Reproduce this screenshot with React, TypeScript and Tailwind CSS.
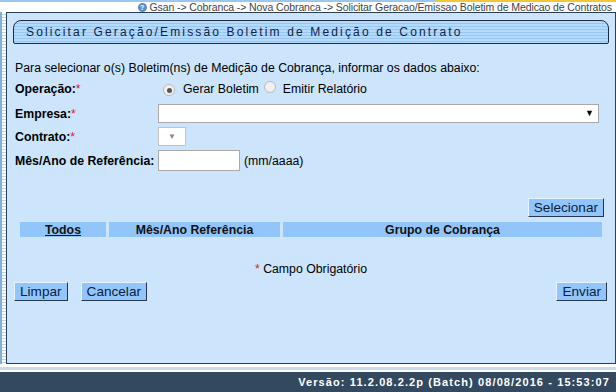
import React from "react";

const label = "text-[12.3px] font-bold text-black";
const btn =
  "h-[19px] px-[5px] bg-[#91c5fb] border border-t-[#e6f2ff] border-l-[#e6f2ff] border-b-[#24374d] border-r-[#24374d] text-[13.6px] leading-none text-[#0c1f3a]";

function Req() {
  return <span className="text-[#e02020] font-normal">*</span>;
}

function Radio({ checked }: { checked?: boolean }) {
  return (
    <span className="inline-flex h-[12px] w-[12px] items-center justify-center rounded-full border border-[#b9b9b9] bg-[#f0f0f0]">
      {checked && <span className="h-[5px] w-[5px] rounded-full bg-[#555]" />}
    </span>
  );
}

export default function App() {
  return (
    <div className="flex h-[392px] w-[616px] flex-col overflow-hidden bg-white font-['Liberation_Sans',Arial,sans-serif]">
      {/* top strip */}
      <div className="flex h-[2px] shrink-0">
        <div className="flex-1 bg-[#9cc7ec]" />
        <div className="w-[180px] bg-[#f4c534]" />
      </div>
      {/* breadcrumb */}
      <div className="flex h-[10px] shrink-0 items-center justify-end gap-[3px] pr-[4px] text-[10.5px] leading-none text-[#444]">
        <span className="inline-flex h-[9px] w-[9px] items-center justify-center rounded-full bg-[#5b8fc7] text-[7px] font-bold text-white">
          ?
        </span>
        <span className="tracking-[-0.1px]">
          Gsan -&gt; Cobranca -&gt; Nova Cobranca -&gt; Solicitar Geracao/Emissao Boletim de Medicao de Contratos
        </span>
      </div>

      {/* body */}
      <div className="flex h-[352px] shrink-0">
        <div className="w-[6px] border-l-2 border-l-[#7fb0de] bg-[repeating-linear-gradient(#ffffff_0px,#ffffff_2px,#b9d6f0_2px,#b9d6f0_3px)]" />
        <div className="flex flex-1 flex-col border border-[#2c3e52] bg-[#cce5fd] px-[6px] pt-[7px]">
          {/* title bar */}
          <div className="flex h-[24px] items-center rounded-t-[8px] rounded-b-[2px] border border-[#1d2d40] bg-[repeating-linear-gradient(#b6dafd_0px,#b6dafd_2px,#96c6f5_2px,#96c6f5_3px)] pl-[12px]">
            <span className="text-[12px] tracking-[2.15px] text-[#0f2440]">
              Solicitar Geração/Emissão Boletim de Medição de Contrato
            </span>
          </div>

          <div className="mt-[15px] pl-[2px] text-[12.3px] text-black">
            Para selecionar o(s) Boletim(ns) de Medição de Cobrança, informar os dados abaixo:
          </div>

          {/* form grid */}
          <div className="grid grid-cols-[143px_1fr] items-center gap-y-[4px] pl-[2px]">
            <div className={label}>
              Operação:<Req />
            </div>
            <div className="flex h-[23px] items-center text-[12.3px] text-black">
              <span className="ml-[5px]"><Radio checked /></span>
              <span className="ml-[8px]">Gerar Boletim</span>
              <span className="ml-[5px]"><Radio /></span>
              <span className="ml-[7px]">Emitir Relatório</span>
            </div>

            <div className={label}>
              Empresa:<Req />
            </div>
            <div className="flex h-[19px] w-[441px] items-center justify-end border border-[#a9a9a9] bg-white pr-[4px] text-[9px] text-black">
              ▼
            </div>

            <div className={label}>
              Contrato:<Req />
            </div>
            <div className="flex h-[19px] w-[28px] items-center justify-center border border-[#c4c4c4] bg-white text-[8px] text-[#888]">
              ▼
            </div>

            <div className={label}>Mês/Ano de Referência:</div>
            <div className="flex items-center gap-[4px]">
              <div className="h-[21px] w-[82px] border border-[#a9a9a9] bg-white" />
              <span className="text-[12.3px] text-black">(mm/aaaa)</span>
            </div>
          </div>

          <div className="mt-[27px] flex justify-end pr-[5px]">
            <button className={btn}>Selecionar</button>
          </div>

          {/* table header */}
          <div className="mt-[5px] ml-[7px] mr-[7px] flex h-[15px] gap-[3px] text-[12.3px] font-bold text-[#111]">
            <div className="flex w-[86px] items-center justify-center bg-[#92c6fb] underline">Todos</div>
            <div className="flex w-[171px] items-center justify-center bg-[#92c6fb]">Mês/Ano Referência</div>
            <div className="flex flex-1 items-center justify-center bg-[#92c6fb]">Grupo de Cobrança</div>
          </div>

          <div className="mt-[23px] text-center text-[12.3px] text-black">
            <Req /> Campo Obrigatório
          </div>

          <div className="mt-[3px] flex items-center pl-[1px] pr-[2px]">
            <button className={btn}>Limpar</button>
            <button className={`${btn} ml-[13px]`}>Cancelar</button>
            <div className="flex-1" />
            <button className={btn}>Enviar</button>
          </div>
        </div>
      </div>

      {/* footer */}
      <div className="mt-[3px] h-[3px] shrink-0 bg-[#c9dced]" />
      <div className="mt-[2px] flex h-[20px] shrink-0 items-center justify-end bg-[#33495f] pr-[6px]">
        <span className="text-[11px] font-bold tracking-[1.1px] text-white">
          Versão: 11.2.08.2.2p (Batch) 08/08/2016 - 15:53:07
        </span>
      </div>
    </div>
  );
}
